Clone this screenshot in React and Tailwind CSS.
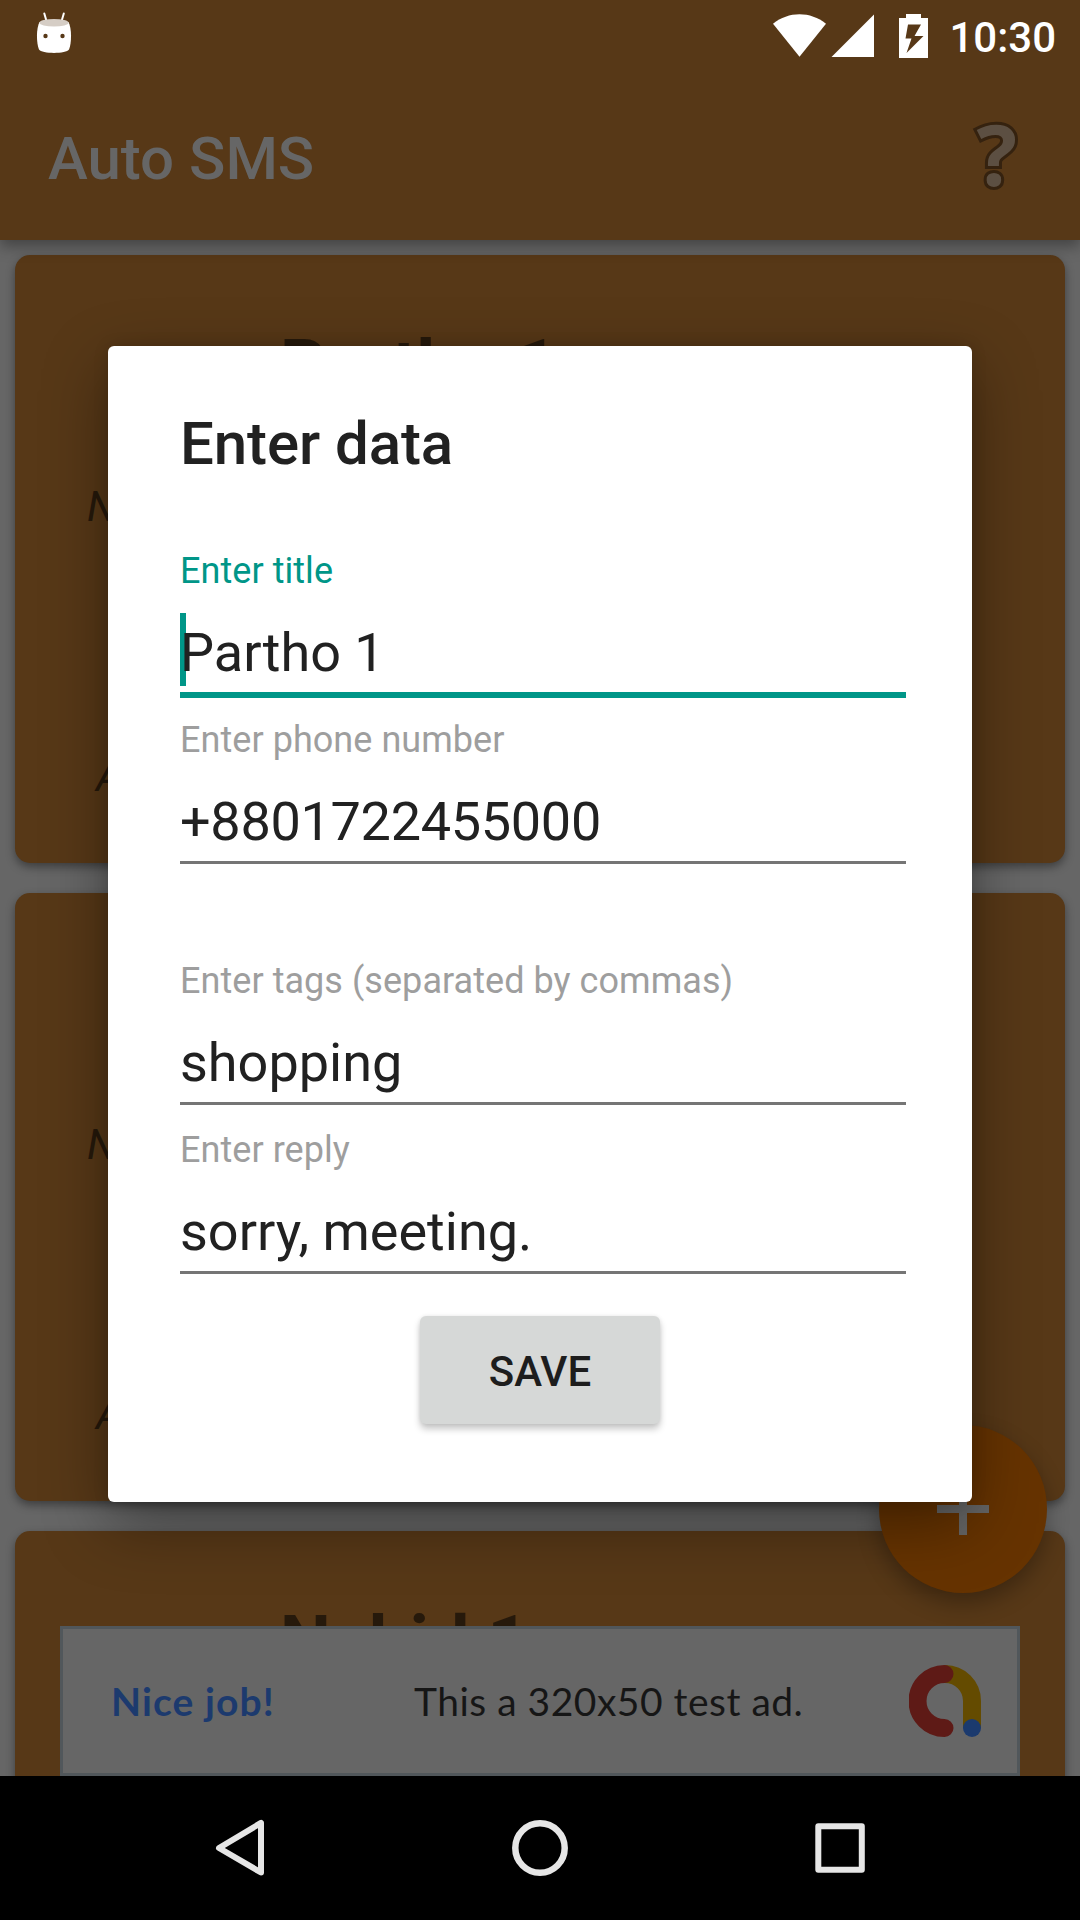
const cards = [
  { title: 'Partho 1', rows: true },
  { title: '', rows: true },
  { title: 'Nahid 1', rows: false },
];

const fields = [
  { label: 'Enter title', value: 'Partho 1', focused: true, gap: 'mt-[71px]', tracking: '' },
  { label: 'Enter phone number', value: '+8801722455000', gap: 'mt-6', tracking: 'tracking-[-0.3px]' },
  { label: 'Enter tags (separated by commas)', value: 'shopping', gap: 'mt-24', tracking: '' },
  { label: 'Enter reply', value: 'sorry, meeting.', gap: 'mt-6', tracking: '' },
];

function StatusBar() {
  return (
    <div className="flex h-[72px] items-start pl-9 pr-6 text-white">
      <svg className="mt-3 h-[42px] w-9" viewBox="36 12 36 42">
        <path d="M44.3 13.5 46.5 21M63.8 13.5 61.6 21" stroke="#fff" strokeWidth="2" strokeLinecap="round" />
        <path d="M39.5 22C36.2 28 36.2 43 39 49.5c2.5 4.5 27.500 4.500 30 0C71.800 43 71.800 28 68.500 22Z" fill="#fff" />
        <ellipse cx="54" cy="22.700" rx="14.600" ry="3.800" fill="#d5cdc5" />
        <circle cx="45.500" cy="36" r="2.200" fill="#573817" />
        <circle cx="62.500" cy="36" r="2.200" fill="#573817" />
      </svg>
      <div className="flex-1" />
      <svg className="mt-3 h-12 w-[156px]" viewBox="773 12 156 48" fill="#fff">
        <path d="M773 23.700C788.500 11 810.500 11 826 23.700L799.500 56.800Z" />
        <path d="M874 14.500V57h-42.500Z" />
        <path fillRule="evenodd" d="M906 14h15v4h7v40h-29V18h7ZM908 24.500 905.500 38.500h6L906.500 53 923.500 36h-9L921 24.500Z" />
      </svg>
      <span className="ml-5 mt-[13px] text-[42px] font-medium leading-[50px]">10:30</span>
    </div>
  );
}

function AppBar() {
  return (
    <header className="relative z-10 h-60 shrink-0 bg-[#573817] shadow-[0_6px_14px_rgba(0,0,0,0.35)]">
      <StatusBar />
      <div className="flex h-[168px] items-center justify-between pl-12 pr-[63px]">
        <h1 className="mt-1.5 text-[60px] font-medium leading-[70px] text-[#666]">Auto SMS</h1>
        <span className="-mt-1.5 font-['Open_Sans',sans-serif] text-[85px] font-bold leading-[100px] text-[#5c4f42] [-webkit-text-stroke:6px_#35220f] [paint-order:stroke_fill]">
          ?
        </span>
      </div>
    </header>
  );
}

function Card({ title, rows }) {
  return (
    <article className="h-[608px] shrink-0 rounded-[15px] bg-[#573817] text-[#26190b] shadow-[0_4px_10px_rgba(0,0,0,0.4)]">
      <h2 className="ml-[265px] h-[84px] translate-y-[70px] text-[72px] font-bold leading-[84px]">{title}</h2>
      {rows && (
        <>
          <p className="ml-[72px] mt-[143px] h-[50px] text-[42px] italic leading-[50px]">N</p>
          <p className="ml-[81px] mt-[220px] h-[50px] text-[42px] italic leading-[50px]">A</p>
        </>
      )}
    </article>
  );
}

function AdBanner() {
  return (
    <aside className="absolute left-[60px] top-[1626px] flex h-[150px] w-[960px] items-center border-[3px] border-[#51575b] bg-[#666] font-['Lato',sans-serif] text-[39px]">
      <span className="ml-12 w-[303px] whitespace-nowrap font-bold tracking-[1.1px] text-[#1c3a6e]">Nice job!</span>
      <span className="w-[495px] whitespace-nowrap tracking-[0.5px] text-[#161616]">This a 320x50 test ad.</span>
      <svg className="h-[72px] w-[72px] shrink-0" viewBox="0 0 72 72" fill="none" strokeWidth="18">
        <path d="M36 9A27 27 0 0 1 63 36V63" stroke="#644b00" />
        <path d="M35.500 9A27 27 0 0 0 35.500 63" stroke="#5e1a16" strokeLinecap="round" />
        <circle cx="63" cy="63" r="9" fill="#1b3a6e" />
      </svg>
    </aside>
  );
}

function Field({ label, value, focused, gap, tracking }) {
  return (
    <div className={gap}>
      <div className={`text-4xl leading-[42px] tracking-[0.05px] ${focused ? 'text-[#009688]' : 'text-[#9e9e9e]'}`}>{label}</div>
      <div
        className={`relative mt-[29px] h-[74px] text-[54px] leading-[64px] text-[#212121] ${
          focused ? 'shadow-[0_3px_0_#009688]' : ''
        } border-b-[3px] ${focused ? 'border-[#009688]' : 'border-[#757575]'}`}
      >
        {focused && <span className="absolute -top-2 left-0 h-[73px] w-1.5 bg-[#009688]" />}
        <span className={`relative ${tracking}`}>{value}</span>
      </div>
    </div>
  );
}

function Dialog() {
  return (
    <section className="absolute left-[108px] top-[346px] flex h-[1156px] w-[864px] flex-col rounded-[6px] bg-white pl-[72px] pr-[66px] pt-[63px] shadow-[0_22px_64px_rgba(0,0,0,0.38),0_0_16px_rgba(0,0,0,0.12)]">
      <h2 className="text-[60px] font-medium leading-[70px] tracking-[-0.1px] text-[#212121]">Enter data</h2>
      {fields.map((f) => (
        <Field key={f.label} {...f} />
      ))}
      <button className="ml-60 mt-[42px] h-[108px] w-60 rounded-[6px] bg-[#d6d8d7] pt-[3px] text-[42px] font-medium leading-[50px] text-[#1d1d1d] shadow-[0_5px_7px_rgba(0,0,0,0.22),0_0_4px_rgba(0,0,0,0.08)]">
        SAVE
      </button>
    </section>
  );
}

function NavBar() {
  return (
    <nav className="absolute bottom-0 left-0 flex h-36 w-full items-center justify-center gap-60 bg-black">
      <svg className="h-[60px] w-[60px]" viewBox="0 0 60 60" fill="none" stroke="#e6e6e6" strokeWidth="6" strokeLinejoin="round">
        <path d="M51 5.200V54.800L9 30.300Z" transform="translate(0 -.3)" />
      </svg>
      <svg className="h-[60px] w-[60px]" viewBox="0 0 60 60" fill="none" stroke="#e6e6e6" strokeWidth="6.500">
        <circle cx="30" cy="30" r="24.700" />
      </svg>
      <svg className="h-[60px] w-[60px]" viewBox="0 0 60 60" fill="none" stroke="#e6e6e6" strokeWidth="6" strokeLinejoin="round">
        <rect x="8.300" y="8.300" width="43.500" height="43.500" />
      </svg>
    </nav>
  );
}

export default function App() {
  return (
    <div className="relative flex h-[1920px] w-[1080px] flex-col overflow-hidden bg-[#666] font-['Roboto',sans-serif]">
      <AppBar />
      <main className="flex flex-col gap-[30px] px-[15px] pt-[15px]">
        {cards.map((card, i) => (
          <Card key={i} {...card} />
        ))}
      </main>
      <div className="absolute left-[879px] top-[1425px] flex h-[168px] w-[168px] items-center justify-center rounded-full bg-[#663300] shadow-[0_10px_22px_rgba(0,0,0,0.3)]">
        <svg className="h-[52px] w-[52px]" viewBox="0 0 52 52" fill="#666">
          <path d="M22 0h8v22h22v8H30v22h-8V30H0v-8h22Z" />
        </svg>
      </div>
      <AdBanner />
      <Dialog />
      <NavBar />
    </div>
  );
}
